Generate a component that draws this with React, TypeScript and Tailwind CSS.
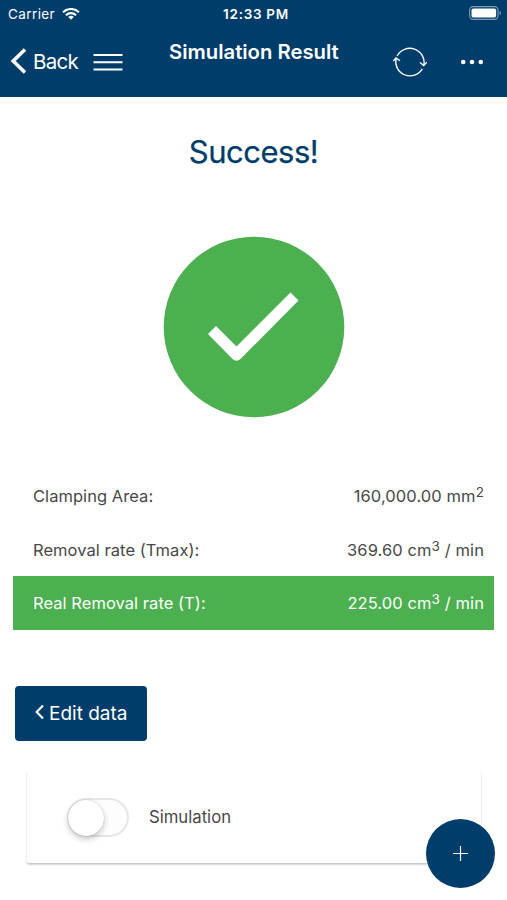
import type { ReactNode } from "react";

function StatusBar() {
  return (
    <div className="grid h-7 grid-cols-3 items-center pl-2 pr-[5px] text-[13.5px] leading-7">
      <div className="flex items-center gap-[7px]">
        <span className="w-[47px] whitespace-nowrap tracking-[0.400px]">Carrier</span>
        <svg className="-mt-px h-3 w-[18px]" viewBox="0 0 18 12" fill="none" stroke="currentColor" strokeWidth="2.1">
          <path d="M1 4.2a11.6 11.6 0 0 1 16 0M3.9 7.2a7.4 7.4 0 0 1 10.2 0" />
          <path d="M9 11.8 6.2 9.1a4.1 4.1 0 0 1 5.600 0Z" fill="currentColor" stroke="none" />
        </svg>
      </div>
      <div className="whitespace-nowrap pl-0.5 text-center font-semibold tracking-[0.700px]">12:33 PM</div>
      <svg className="-mt-0.5 h-[14px] w-[33px] justify-self-end" viewBox="0 0 33 14" fill="none">
        <rect x="0.6" y="0.6" width="28.4" height="12.8" rx="3.6" stroke="#7f9eb5" strokeWidth="1.1" />
        <rect x="2.5" y="2.5" width="24.6" height="9" rx="1.8" fill="white" />
        <path d="M30.5 5v4c1-.4 1.4-1.1 1.4-2s-.4-1.600-1.400-2Z" fill="#7f9eb5" />
      </svg>
    </div>
  );
}

function Header() {
  return (
    <header className="h-[97px] bg-[#003d6a] text-white">
      <StatusBar />
      <div className="flex h-[68px] items-center pl-[10px] pr-[23px]">
        <svg className="-mt-[3px] h-[26px] w-4" viewBox="0 0 16 26" fill="none" stroke="currentColor" strokeWidth="3.6">
          <path d="M15 1.500 3.200 13 15 24.500" />
        </svg>
        <span className="ml-[7px] w-[46px] whitespace-nowrap text-[20.500px] tracking-[-0.700px]">Back</span>
        <svg className="ml-[14px] h-5 w-[30px]" viewBox="0 0 30 20" stroke="currentColor" strokeWidth="2">
          <path d="M0.500 3h29M0.500 10.300h29M0.500 17.600h29" />
        </svg>
        <h1 className="-mt-5 ml-[46px] w-[170px] whitespace-nowrap text-[20.300px] font-semibold">
          Simulation Result
        </h1>
        <svg className="-mt-0.5 ml-[54px] h-[34px] w-[34px]" viewBox="0 0 34 34" fill="none" stroke="currentColor" strokeWidth="1.350">
          <path d="M4.100 12A14.300 14.300 0 0 1 30.800 21.500M29.300 24.900A14.300 14.300 0 0 1 3.200 13.900" />
          <path d="M0.200 17 3 14 7 16.700M27 18.500l3.600 3.100 3.200-3.300" />
        </svg>
        <svg className="ml-[33px] h-[6px] w-6" viewBox="0 0 24 6" fill="currentColor">
          <circle cx="3.200" cy="3" r="2.300" />
          <circle cx="12" cy="3" r="2.300" />
          <circle cx="20.800" cy="3" r="2.300" />
        </svg>
      </div>
    </header>
  );
}

function ResultRow({ label, highlighted = false, children }: { label: string; highlighted?: boolean; children: ReactNode }) {
  return (
    <div
      className={`flex h-[53.7px] items-center justify-between pl-5 pr-[10px] pt-px text-[16.5px] ${
        highlighted ? "bg-[#4caf50] text-white" : "text-[#484848]"
      }`}
    >
      <span className="tracking-[0.050px]">{label}</span>
      <span className="tracking-[0.090px]">{children}</span>
    </div>
  );
}

function Exponent({ children }: { children: ReactNode }) {
  return <sup className="-top-[5px] text-[13.5px]">{children}</sup>;
}

export default function App() {
  return (
    <div className="relative h-[900px] w-[507px] overflow-hidden bg-white font-['Inter','Liberation_Sans',sans-serif]">
      <Header />
      <main>
        <h2 className="pt-[35px] text-center text-[31px] font-normal leading-[40px] tracking-[-0.500px] text-[#003d6a] [-webkit-text-stroke:0.250px_#003d6a]">
          Success!
        </h2>
        <svg className="mx-auto mt-[64px] block h-[182px] w-[182px]" viewBox="0 0 182 182">
          <circle cx="91" cy="91" r="90.300" fill="#4caf50" />
          <path
            d="m53 90 20.500 20.500L127.500 56.500l8 8L77.500 123q-4 3.500-8 0L45 98Z"
            fill="white"
          />
        </svg>
        <section className="mx-[13px] mt-[51px]">
          <ResultRow label="Clamping Area:">
            160,000.00 mm<Exponent>2</Exponent>
          </ResultRow>
          <ResultRow label="Removal rate (Tmax):">
            369.60 cm<Exponent>3</Exponent> / min
          </ResultRow>
          <ResultRow label="Real Removal rate (T):" highlighted>
            225.00 cm<Exponent>3</Exponent> / min
          </ResultRow>
        </section>
        <button className="ml-[15px] mt-[55.900px] flex h-[55px] w-[132px] items-center rounded-[4px] bg-[#003d6a] pl-5 text-white">
          <svg className="-mt-0.5 h-4 w-[9px]" viewBox="0 0 9 16" fill="none" stroke="currentColor" strokeWidth="2.200">
            <path d="M8 1.500 1.700 8 8 14.500" />
          </svg>
          <span className="ml-[5px] mt-0.5 whitespace-nowrap text-[19px]">Edit data</span>
        </button>
        <section className="ml-[27px] mt-[30px] flex h-[92px] w-[454px] items-center rounded-[2px] bg-white pl-10 pt-[2px] shadow-[0_2px_2px_rgba(0,0,0,0.14),0_1px_2px_rgba(0,0,0,0.12)]">
          <div className="flex h-[39px] w-[62px] items-center rounded-full border-2 border-[#e6e6e6] bg-[#fdfdfd]">
            <div className="-ml-px h-9 w-9 shrink-0 rounded-full bg-white shadow-[0_3px_6px_rgba(0,0,0,0.22),0_0_1px_rgba(0,0,0,0.25)]" />
          </div>
          <span className="ml-5 text-[16.700px] text-[#484848]">Simulation</span>
        </section>
      </main>
      <button className="absolute left-[426px] top-[819px] flex h-[69px] w-[69px] items-center justify-center rounded-full bg-[#003d6a] text-white">
        <svg className="h-[15px] w-[15px]" viewBox="0 0 15 15" stroke="currentColor" strokeWidth="1.200">
          <path d="M7.500 0v15M0 7.500h15" />
        </svg>
      </button>
    </div>
  );
}
